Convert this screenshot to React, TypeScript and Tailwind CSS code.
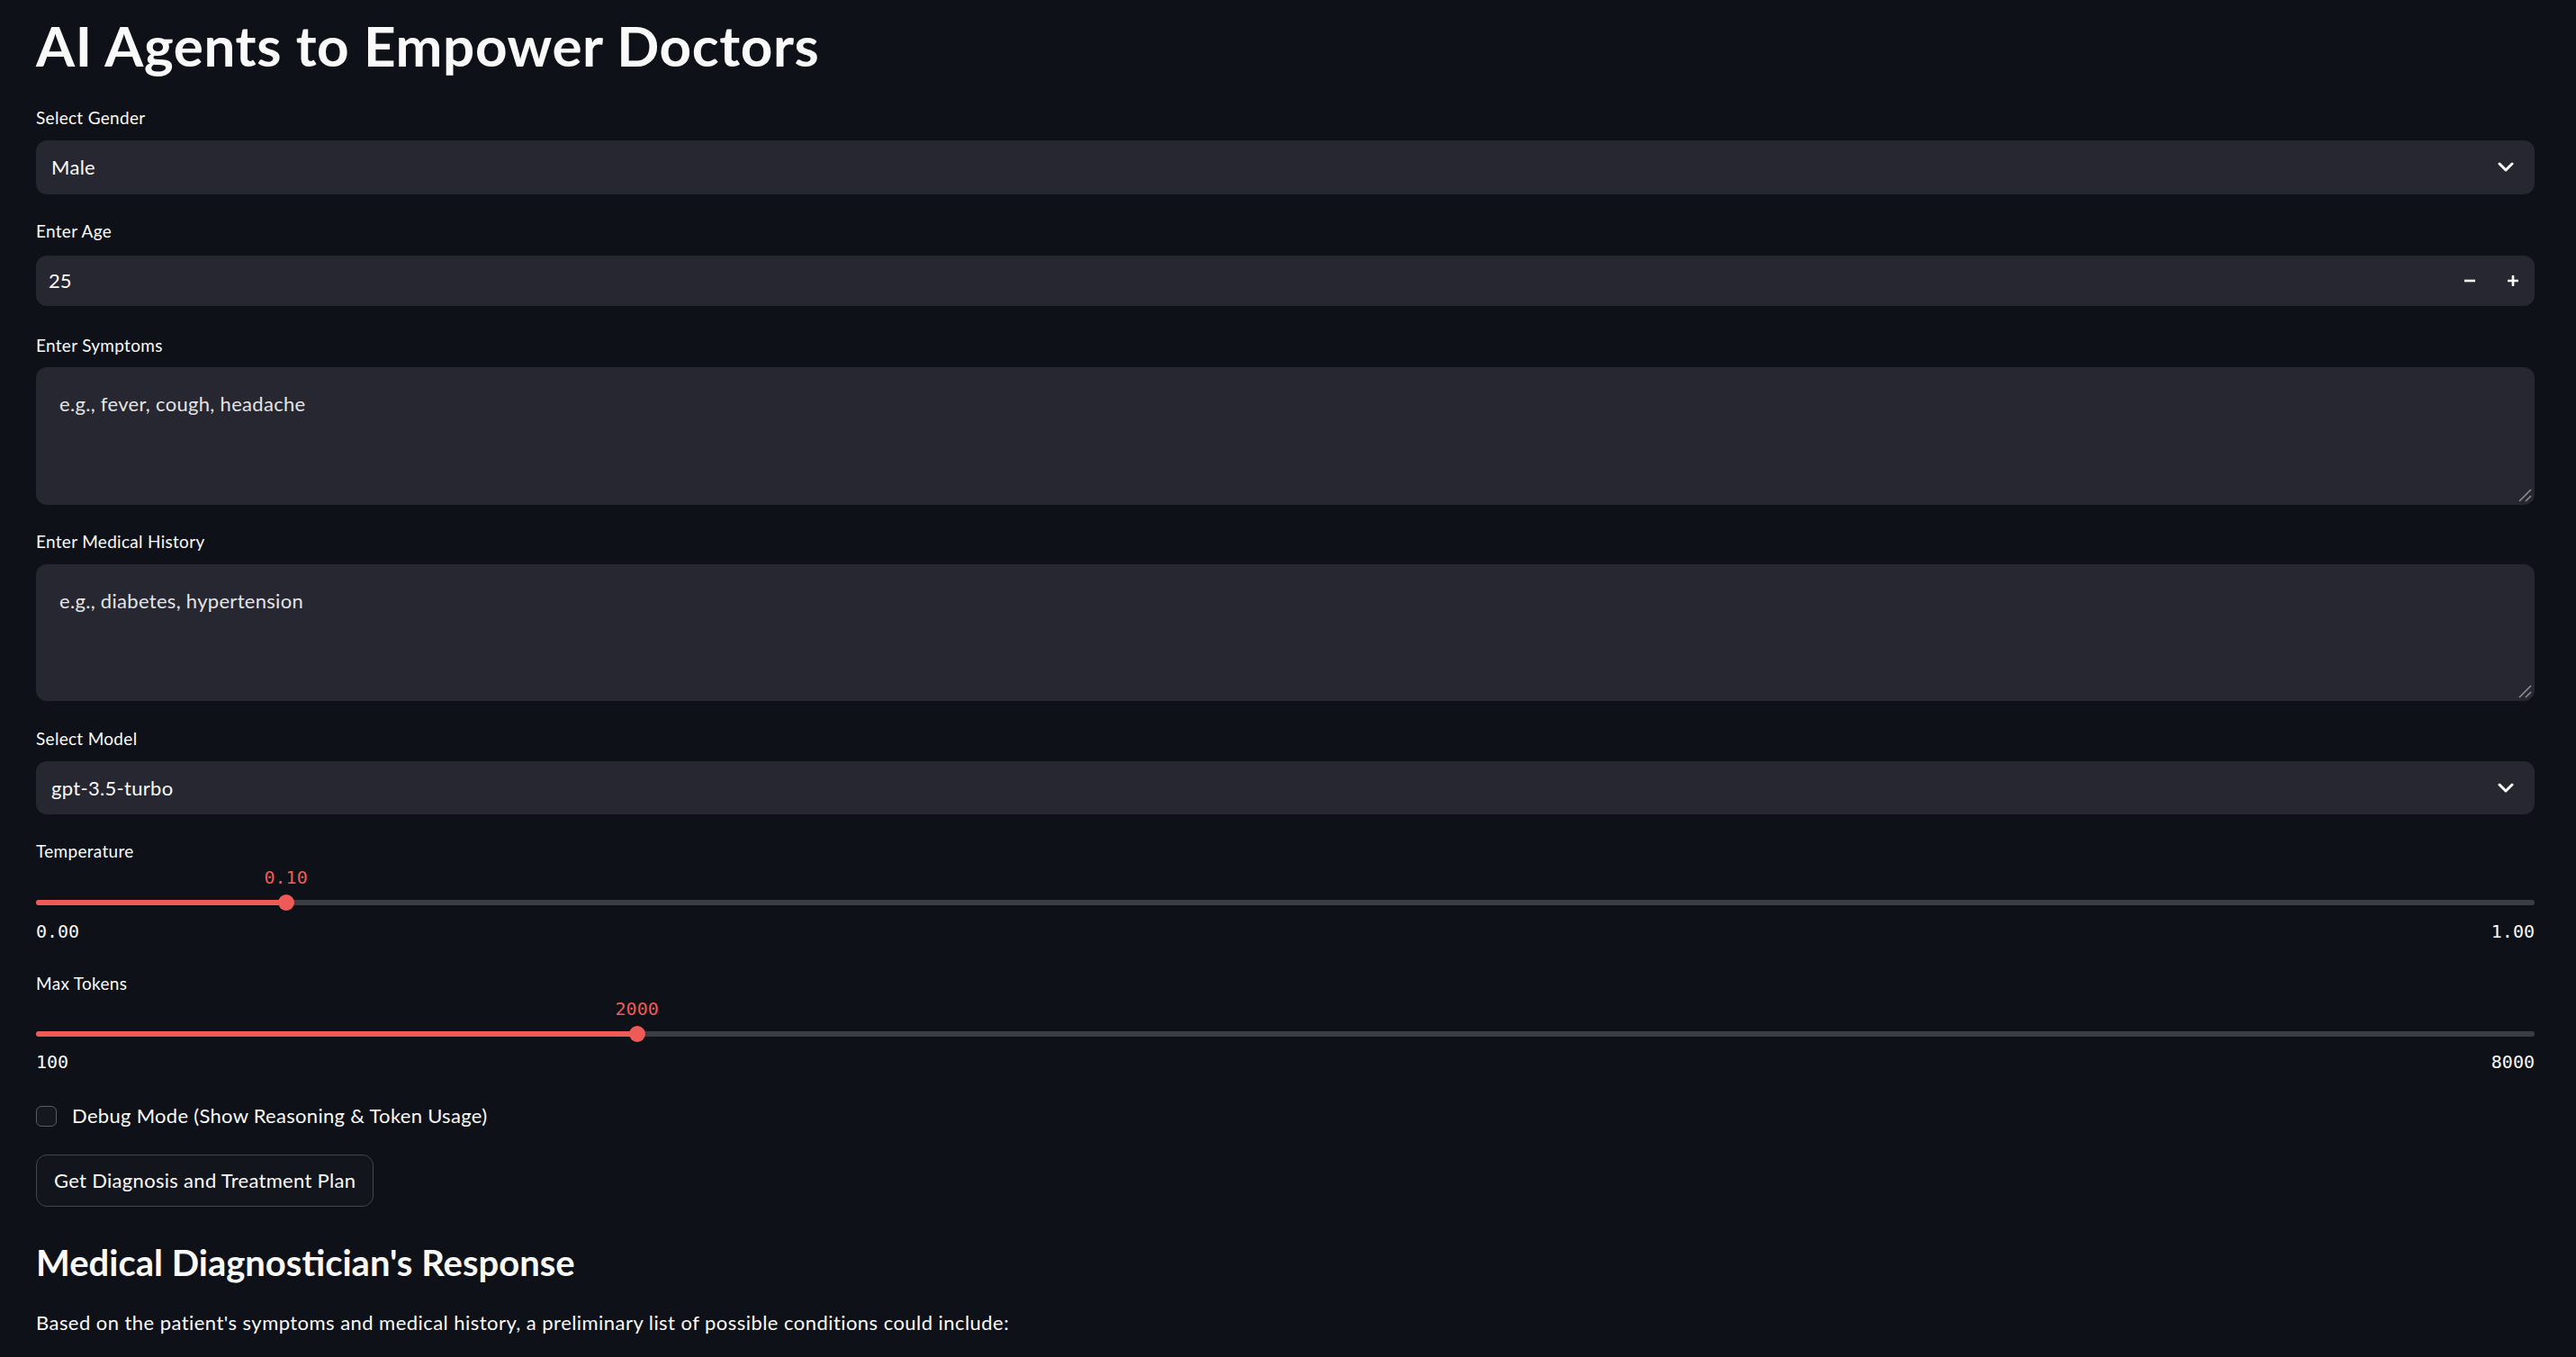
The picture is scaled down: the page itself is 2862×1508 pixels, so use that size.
import React from "react";

function Label({ children, mt }: { children: React.ReactNode; mt: string }) {
  return <div className={`${mt} text-[19px] leading-[23px] tracking-[0.3px] text-[#fafafa]`}>{children}</div>;
}

function Chevron() {
  return (
    <svg width="18" height="12" viewBox="0 0 18 12" fill="none">
      <path d="M2 2 L9 9 L16 2" stroke="#fafafa" strokeWidth="3" strokeLinecap="round" strokeLinejoin="round" />
    </svg>
  );
}

function SelectBox({ value, mt, h }: { value: string; mt: string; h: string }) {
  return (
    <div className={`${mt} ${h} flex items-center justify-between rounded-[12px] bg-[#262730] pl-[17px] pr-[23px]`}>
      <span className="text-[22px] leading-[26px] tracking-[0.3px] text-[#fafafa]">{value}</span>
      <Chevron />
    </div>
  );
}

function ResizeHandle() {
  return (
    <svg className="absolute bottom-[3px] right-[3px]" width="16" height="16" viewBox="0 0 16 16" fill="none">
      <path d="M2 15 L15 2" stroke="#8d8e93" strokeWidth="1.6" />
      <path d="M9 15 L15 9" stroke="#8d8e93" strokeWidth="1.6" />
    </svg>
  );
}

function TextArea({ placeholder, mt, h }: { placeholder: string; mt: string; h: string }) {
  return (
    <div className={`${mt} ${h} relative rounded-[12px] bg-[#262730] pl-[26px] pt-[28px]`}>
      <span className="text-[22px] leading-[26px] tracking-[0.3px] text-[#e4e4e6]">{placeholder}</span>
      <ResizeHandle />
    </div>
  );
}

function Slider({
  value,
  min,
  max,
  valueText,
  minText,
  maxText,
  valueMt,
  trackMt,
  rangeMt,
}: {
  value: number;
  min: number;
  max: number;
  valueText: string;
  minText: string;
  maxText: string;
  valueMt: string;
  trackMt: string;
  rangeMt: string;
}) {
  const pct = ((value - min) / (max - min)) * 100;
  return (
    <div className="font-['DejaVu_Sans_Mono',monospace]">
      <div className={`${valueMt} relative h-[24px]`}>
        <span
          className="absolute top-0 -translate-x-1/2 text-[20px] leading-[24px] text-[#ee5a55]"
          style={{ left: `${pct}%` }}
        >
          {valueText}
        </span>
      </div>
      <div className={`${trackMt} relative flex h-[18px] items-center`}>
        <div className="h-[6px] w-full rounded-full bg-[#3b3d45]" />
        <div
          className="absolute left-0 top-[6px] h-[6px] rounded-full bg-[#ee5a55]"
          style={{ width: `${pct}%` }}
        />
        <div
          className="absolute top-0 h-[18px] w-[18px] -translate-x-1/2 rounded-full bg-[#ee5a55]"
          style={{ left: `${pct}%` }}
        />
      </div>
      <div className={`${rangeMt} flex h-[24px] justify-between text-[20px] leading-[24px] text-[#fafafa]`}>
        <span>{minText}</span>
        <span>{maxText}</span>
      </div>
    </div>
  );
}

export default function App() {
  return (
    <div className="min-h-screen w-full bg-[#0e1117] font-['Lato','Noto_Sans',sans-serif] text-[#fafafa]">
      <div className="flex flex-col pl-[40px] pr-[46px] pt-[13px]">
        <h1 className="text-[62px] font-bold leading-[74px] tracking-[0.6px]">AI Agents to Empower Doctors</h1>

        <Label mt="mt-[32px]">Select Gender</Label>
        <SelectBox value="Male" mt="mt-[14px]" h="h-[60px]" />

        <Label mt="mt-[29px]">Enter Age</Label>
        <div className="mt-[16px] flex h-[56px] items-center rounded-[12px] bg-[#262730] pl-[14px]">
          <span className="flex-1 text-[22px] leading-[26px]">25</span>
          <div className="flex h-full">
            <div className="flex w-[48px] items-center justify-center">
              <svg width="14" height="14" viewBox="0 0 14 14" fill="none">
                <path d="M1 7 H13" stroke="#fafafa" strokeWidth="2.6" />
              </svg>
            </div>
            <div className="flex w-[48px] items-center justify-center">
              <svg width="14" height="14" viewBox="0 0 14 14" fill="none">
                <path d="M1 7 H13 M7 1 V13" stroke="#fafafa" strokeWidth="2.6" />
              </svg>
            </div>
          </div>
        </div>

        <Label mt="mt-[32px]">Enter Symptoms</Label>
        <TextArea placeholder="e.g., fever, cough, headache" mt="mt-[13px]" h="h-[153px]" />

        <Label mt="mt-[29px]">Enter Medical History</Label>
        <TextArea placeholder="e.g., diabetes, hypertension" mt="mt-[14px]" h="h-[152px]" />

        <Label mt="mt-[30px]">Select Model</Label>
        <SelectBox value="gpt-3.5-turbo" mt="mt-[14px]" h="h-[59px]" />

        <Label mt="mt-[29px]">Temperature</Label>
        <Slider
          value={0.1}
          min={0}
          max={1}
          valueText="0.10"
          minText="0.00"
          maxText="1.00"
          valueMt="mt-[6px]"
          trackMt="mt-[7px]"
          rangeMt="mt-[11px]"
        />

        <Label mt="mt-[34px]">Max Tokens</Label>
        <Slider
          value={2000}
          min={100}
          max={8000}
          valueText="2000"
          minText="100"
          maxText="8000"
          valueMt="mt-[5px]"
          trackMt="mt-[7px]"
          rangeMt="mt-[10px]"
        />

        <div className="mt-[35px] flex h-[26px] items-center gap-[17px]">
          <div className="h-[23px] w-[23px] rounded-[6px] border border-[#5a5c64] bg-[#161820]" />
          <span className="text-[22px] leading-[26px] tracking-[0.3px]">Debug Mode (Show Reasoning &amp; Token Usage)</span>
        </div>

        <div className="mt-[30px] flex">
          <button className="flex h-[58px] items-center rounded-[12px] border border-[#44464e] bg-[#13151c] px-[19px] text-[22px] leading-[26px] tracking-[0.3px] text-[#fafafa]">
            Get Diagnosis and Treatment Plan
          </button>
        </div>

        <h3 className="mt-[38px] text-[40px] font-bold leading-[48px]">Medical Diagnostician's Response</h3>

        <p className="mt-[30px] text-[22px] leading-[26px] tracking-[0.45px]">
          Based on the patient's symptoms and medical history, a preliminary list of possible conditions could include:
        </p>
      </div>
    </div>
  );
}
